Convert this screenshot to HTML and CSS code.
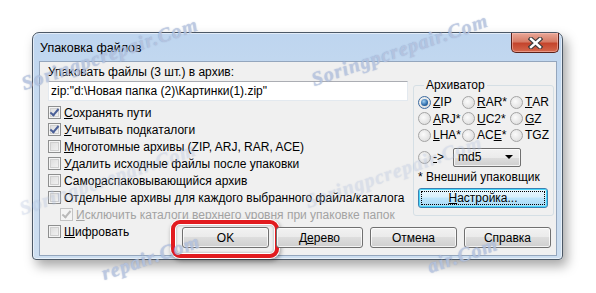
FILE: index.html
```html
<!doctype html>
<html lang="ru">
    <head>
        <meta charset="UTF-8" />
        <title>Упаковка файлов</title>
        <link rel="stylesheet" href="styles.css">
    </head>
    <body>
        <div class="window">
            <div class="titlebar">
                <span class="title">Упаковка файлов</span>
                <button class="close" type="button">
                    <svg width="15" height="12" viewBox="0 0 15 12">
                        <path d="M3 2 L12 10 M12 2 L3 10" stroke="#3a3a3a" stroke-width="4.6" stroke-linecap="square" />
                        <path d="M3 2 L12 10 M12 2 L3 10" stroke="#fff" stroke-width="2.4" stroke-linecap="square" />
                    </svg>
                </button>
            </div>

            <div class="client">
                <div class="top">
                    <div class="left">
                        <div class="label">Упаковать файлы (3 шт.) в архив:</div>
                        <div class="textbox">zip:"d:\Новая папка (2)\Картинки(1).zip"</div>

                        <div class="check-list">
                            <label class="check"><span class="box checked"></span><u>С</u>охранять пути</label>
                            <label class="check"><span class="box checked"></span><u>У</u>читывать подкаталоги</label>
                            <label class="check"><span class="box"></span><u>М</u>ноготомные архивы (ZIP, ARJ, RAR, ACE)</label>
                            <label class="check"><span class="box"></span><u>У</u>далить исходные файлы после упаковки</label>
                            <label class="check"><span class="box"></span>Само<u>р</u>аспаковывающийся архив</label>
                            <label class="check"><span class="box"></span>Отдельные архивы для каж<u>д</u>ого выбранного файла/каталога</label>
                            <label class="check sub disabled"><span class="box checked"></span><u>И</u>сключить каталоги верхнего уровня при упаковке папок</label>
                        </div>
                    </div>

                    <fieldset class="group">
                        <legend>Архиватор</legend>
                        <div class="radios">
                            <label class="radio"><span class="dot on"></span><u>Z</u>IP</label>
                            <label class="radio"><span class="dot"></span><u>R</u>AR*</label>
                            <label class="radio"><span class="dot"></span><u>T</u>AR</label>
                            <label class="radio"><span class="dot"></span><u>A</u>RJ*</label>
                            <label class="radio"><span class="dot"></span><u>U</u>C2*</label>
                            <label class="radio"><span class="dot"></span><u>G</u>Z</label>
                            <label class="radio"><span class="dot"></span><u>L</u>HA*</label>
                            <label class="radio"><span class="dot"></span>AC<u>E</u>*</label>
                            <label class="radio"><span class="dot"></span>TGZ</label>
                        </div>
                        <div class="other">
                            <label class="radio"><span class="dot"></span><u>-</u>&gt;</label>
                            <div class="combo">md5<span class="arrow"></span></div>
                        </div>
                        <div class="note">* Внешний упаковщик</div>
                        <button class="btn setup" type="button"><span class="focus"><u>Н</u>астройка...</span></button>
                    </fieldset>
                </div>

                <div class="bottom">
                    <label class="check"><span class="box"></span><u>Ш</u>ифровать</label>
                    <div class="buttons">
                        <button class="btn ok" type="button">OK<span class="mark"></span></button>
                        <button class="btn" type="button">Д<u>е</u>рево</button>
                        <button class="btn" type="button">Отмена</button>
                        <button class="btn" type="button">Справка</button>
                    </div>
                </div>
            </div>
        </div>

        <!-- водяные знаки поверх картинки -->
        <span class="wm wm1">Soringpcrepair.Com</span>
        <span class="wm wm2">Soringpcrepair.Com</span>
        <span class="wm wm3 faint">Soringpcrepair.Com</span>
        <span class="wm wm4 faint">Soringpcrepair.Com</span>
        <span class="wm wm5">repair.Com</span>
        <span class="wm wm6">air.Com</span>
    </body>
</html>
```

FILE: styles.css
```css
body {
    margin: 0;
    background: #fff;
    font-family: "Liberation Sans", Arial, sans-serif;
    font-size: 12px;
    color: #000;
    position: relative;
    width: 596px;
    height: 293px;
    overflow: hidden;
}
u {
    text-decoration: underline;
    text-underline-offset: 1px;
}
.window {
    box-sizing: border-box;
    width: 531px;
    height: 228px;
    margin: 32px 0 0 32px;
    border: 1px solid #4c5866;
    border-radius: 7px 7px 4px 4px;
    background: linear-gradient(#bed5ef, #c9dcf0 40%, #cddef0);
    box-shadow: inset 0 0 0 1px rgba(255, 255, 255, 0.55), 4px 6px 12px rgba(0, 0, 0, 0.35);
    padding: 0 5px 3px 6px;
    display: flex;
    flex-direction: column;
}
.titlebar {
    height: 28px;
    display: flex;
    align-items: flex-start;
    flex-shrink: 0;
}
.title {
    margin: 7px 0 0 1px;
    font-size: 12.5px;
    line-height: 16px;
}
.close {
    margin-left: auto;
    margin-right: -2px;
    width: 48px;
    height: 20px;
    padding: 0;
    border: 1px solid #5b2019;
    border-top: none;
    border-radius: 0 0 5px 5px;
    background: linear-gradient(#e9a898, #d67c66 45%, #c4452d 55%, #d4684d);
    box-shadow: inset 0 0 0 1px rgba(255, 200, 190, 0.5);
    display: flex;
    align-items: center;
    justify-content: center;
}
.client {
    flex: 1;
    background: #f0f0f0;
    border: 1px solid #94a6bd;
    padding: 2px 2px 0 8px;
    display: flex;
    flex-direction: column;
}
.top {
    display: flex;
    gap: 5px;
}
.left {
    width: 360px;
}
.label {
    line-height: 16px;
}
.textbox {
    box-sizing: border-box;
    height: 20px;
    margin-top: 1px;
    border: 1px solid #e3e9ef;
    border-top-color: #abadb3;
    background: #fff;
    padding: 0 2px;
    line-height: 18px;
    white-space: nowrap;
}
.check-list {
    margin-top: 3px;
}
.check {
    display: flex;
    align-items: center;
    height: 17px;
    white-space: nowrap;
}
.check.sub {
    padding-left: 12px;
}
.check.disabled {
    color: #a3a3a3;
}
.box {
    box-sizing: border-box;
    width: 13px;
    height: 13px;
    margin-right: 3px;
    flex-shrink: 0;
    border: 1px solid #8e8f8f;
    background: linear-gradient(135deg, #d9d9d9, #f6f6f6);
    box-shadow: inset 0 0 0 1px #f4f4f4, inset 0 0 0 2px #cfcfcf;
    position: relative;
}
.box.checked::after {
    content: "";
    position: absolute;
    left: 3px;
    top: 0px;
    width: 3px;
    height: 7px;
    border: solid #4a5f97;
    border-width: 0 2px 2px 0;
    transform: rotate(40deg);
}
.disabled .box {
    border-color: #c4c4c4;
    background: #f4f4f4;
    box-shadow: none;
}
.disabled .box.checked::after {
    border-color: #b9b9b9;
}

.group {
    box-sizing: border-box;
    width: 141px;
    height: 139px;
    margin: 13px 0 0;
    padding: 1px 4px 0;
    border: 1px solid #d5dfe5;
    border-radius: 3px;
    min-width: 0;
}
.group legend {
    padding: 0 2px;
    margin-left: 6px;
    line-height: 16px;
}
.radios {
    display: grid;
    grid-template-columns: 44px 48px auto;
    grid-auto-rows: 16.5px;
}
.radio {
    display: flex;
    align-items: center;
    white-space: nowrap;
}
.dot {
    box-sizing: border-box;
    width: 13px;
    height: 13px;
    margin-right: 2px;
    border-radius: 50%;
    border: 1px solid #a4a4a4;
    background: radial-gradient(circle at 40% 40%, #fbfbfb, #d6d6d6);
    flex-shrink: 0;
    position: relative;
}
.dot.on {
    border-color: #3c6ba1;
}
.dot.on::after {
    content: "";
    position: absolute;
    left: 2px;
    top: 2px;
    width: 7px;
    height: 7px;
    border-radius: 50%;
    background: radial-gradient(circle at 40% 35%, #9fd0f3, #2a68a8 60%, #14406f);
}
.other {
    display: flex;
    align-items: center;
    margin-top: 4px;
    height: 19px;
}
.other .radio {
    width: 35px;
}
.combo {
    box-sizing: border-box;
    width: 68px;
    height: 19px;
    border: 1px solid #707070;
    border-radius: 2px;
    background: linear-gradient(#f2f2f2, #ebebeb 50%, #dddddd 51%, #cfcfcf);
    box-shadow: inset 0 0 0 1px rgba(255, 255, 255, 0.7);
    padding: 0 4px;
    line-height: 17px;
    display: flex;
    align-items: center;
}
.arrow {
    margin-left: auto;
    width: 0;
    height: 0;
    border: 4px solid transparent;
    border-top: 4px solid #000;
    border-bottom: none;
    margin-right: 3px;
}
.note {
    margin-top: 2px;
    line-height: 16px;
    white-space: nowrap;
}
.btn {
    box-sizing: border-box;
    width: 87px;
    height: 21px;
    padding: 0;
    border: 1px solid #707070;
    border-radius: 3px;
    background: linear-gradient(#f2f2f2, #ebebeb 45%, #dddddd 50%, #cfcfcf);
    box-shadow: inset 0 0 0 1px rgba(255, 255, 255, 0.75);
    font: inherit;
    color: #000;
    position: relative;
}
.btn.setup {
    width: 130px;
    height: 20px;
    margin-top: 3px;
    border-color: #3c7fb1;
    background: linear-gradient(#eaf6fd, #d9f0fc 45%, #bee6fd 50%, #a7d9f5);
    box-shadow: inset 0 0 0 1px #48d8fb;
    padding: 2px;
}
.focus {
    display: block;
    height: 100%;
    box-sizing: border-box;
    border: 1px dotted #000;
    line-height: 13px;
}
.bottom {
    display: flex;
    align-items: flex-start;
}
.buttons {
    margin: 4px 3px 0 auto;
    display: flex;
    gap: 7px;
}
.mark {
    position: absolute;
    left: -12px;
    top: -8px;
    width: 108px;
    height: 38px;
    box-sizing: border-box;
    border: 4px solid #e21b1f;
    border-radius: 9px;
    box-shadow: 0 0 0 1px #fff, 1px 2px 4px 1px rgba(0, 0, 0, 0.35), inset 0 0 0 1px #fff, inset 0 0 2px 2px rgba(0, 0, 0, 0.15);
}

.wm {
    position: absolute;
    font-family: "Liberation Serif", serif;
    font-style: italic;
    font-weight: bold;
    font-size: 20px;
    letter-spacing: 1px;
    color: rgba(196, 208, 232, 0.7);
    text-shadow: 0 0 1px rgba(90, 115, 170, 0.5);
    transform: rotate(-19deg);
    transform-origin: left bottom;
    white-space: nowrap;
    pointer-events: none;
}
.wm.faint {
    opacity: 0.4;
}
.wm1 {
    left: 26px;
    top: 72px;
}
.wm2 {
    left: 316px;
    top: 68px;
}
.wm3 {
    left: 24px;
    top: 197px;
}
.wm4 {
    left: 310px;
    top: 190px;
}
.wm5 {
    left: 106px;
    top: 262px;
}
.wm6 {
    left: 432px;
    top: 255px;
}
```
